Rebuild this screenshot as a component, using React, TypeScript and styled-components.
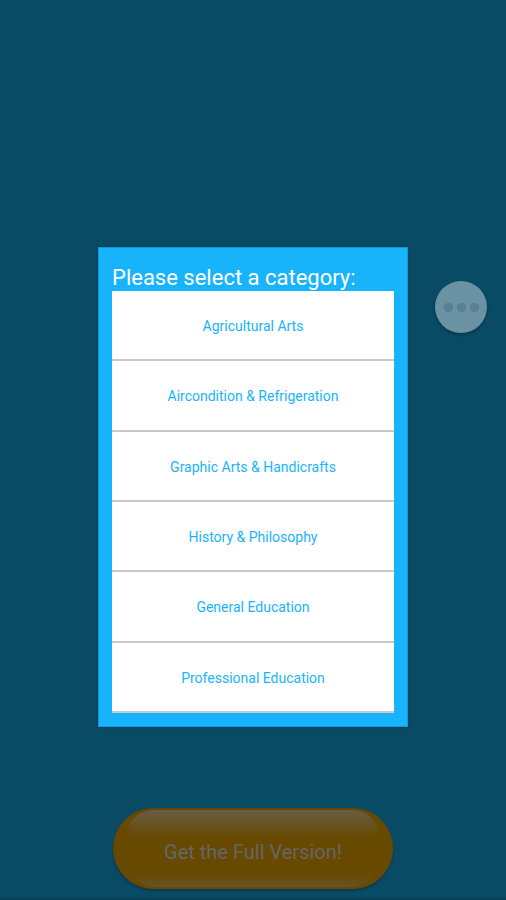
import React from "react";
import styled, { createGlobalStyle } from "styled-components";

const GlobalStyle = createGlobalStyle`
  * { box-sizing: border-box; }
  body { margin: 0; background: #094a65; font-family: Roboto, sans-serif; }
`;

const Screen = styled.div`
  min-height: 100vh;
  display: grid;
  grid-template-rows: 1fr auto 1fr;
  justify-items: center;
  border-bottom: 2px solid #073f57;
  padding-top: 76px;
`;

const Dialog = styled.section`
  grid-row: 2;
  width: 310px;
  padding: 15px 13px 13px;
  border: 1px solid #119ad8;
  background: #18b4fb;
  box-shadow: 0 0 2px rgba(0, 20, 30, 0.4);
`;

const Title = styled.h1`
  margin: 0;
  padding-top: 2px;
  font-size: 22px;
  font-weight: 400;
  line-height: 26px;
  color: #fff;
`;

const List = styled.ul`
  display: grid;
  grid-auto-rows: 1fr;
  min-height: 422px;
  list-style: none;
  margin: 0;
  padding: 0;
`;

const Category = styled.button`
  display: block;
  width: 100%;
  height: 100%;
  padding: 2px 0 0;
  border: 0;
  border-bottom: 2px solid #c9c9cb;
  background: #fff;
  color: #18b4fb;
  font: 14px Roboto, sans-serif;
  cursor: pointer;
`;

const Footer = styled.footer`
  grid-row: 3;
  align-self: end;
  padding-bottom: 9px;
`;

const Upgrade = styled.button`
  position: relative;
  display: block;
  width: 280px;
  height: 81px;
  padding: 6px 0 0;
  border: 1px solid #6a4600;
  border-radius: 40px;
  background: #674a00;
  box-shadow: 0 2px 2px rgba(0, 0, 0, 0.2);
  color: #666;
  font: 20px Roboto, sans-serif;
  cursor: pointer;
  overflow: hidden;

  &::before,
  &::after {
    content: "";
    position: absolute;
  }

  &::before {
    top: 1px;
    left: 13px;
    right: 13px;
    height: 27px;
    border-radius: 28px 28px 0 0 / 24px 24px 0 0;
    background: linear-gradient(#685d46, #674a00);
  }

  &::after {
    bottom: 1px;
    left: 20px;
    right: 20px;
    height: 13px;
    border-radius: 0 0 26px 26px / 0 0 13px 13px;
    background: linear-gradient(#674a00, #67522a);
  }
`;

const Bubble = styled.button`
  position: fixed;
  right: 19px;
  top: 281px;
  display: flex;
  align-items: center;
  justify-content: center;
  gap: 4px;
  width: 52px;
  height: 52px;
  padding: 0;
  border: 0;
  border-radius: 50%;
  background: #6b92a2;
  box-shadow: 0 2px 3px rgba(0, 0, 0, 0.25);
  cursor: pointer;
`;

const Dot = styled.span`
  width: 9px;
  height: 9px;
  border-radius: 50%;
  background: #5a8192;
  box-shadow: inset 0 0 1px #4f7587;
`;

const categories = [
  "Agricultural Arts",
  "Aircondition & Refrigeration",
  "Graphic Arts & Handicrafts",
  "History & Philosophy",
  "General Education",
  "Professional Education",
];

export default function App() {
  return (
    <Screen>
      <GlobalStyle />
      <Dialog>
        <Title>Please select a category:</Title>
        <List>
          {categories.map((name) => (
            <li key={name}>
              <Category>{name}</Category>
            </li>
          ))}
        </List>
      </Dialog>
      <Footer>
        <Upgrade>Get the Full Version!</Upgrade>
      </Footer>
      <Bubble aria-label="More options">
        <Dot />
        <Dot />
        <Dot />
      </Bubble>
    </Screen>
  );
}
